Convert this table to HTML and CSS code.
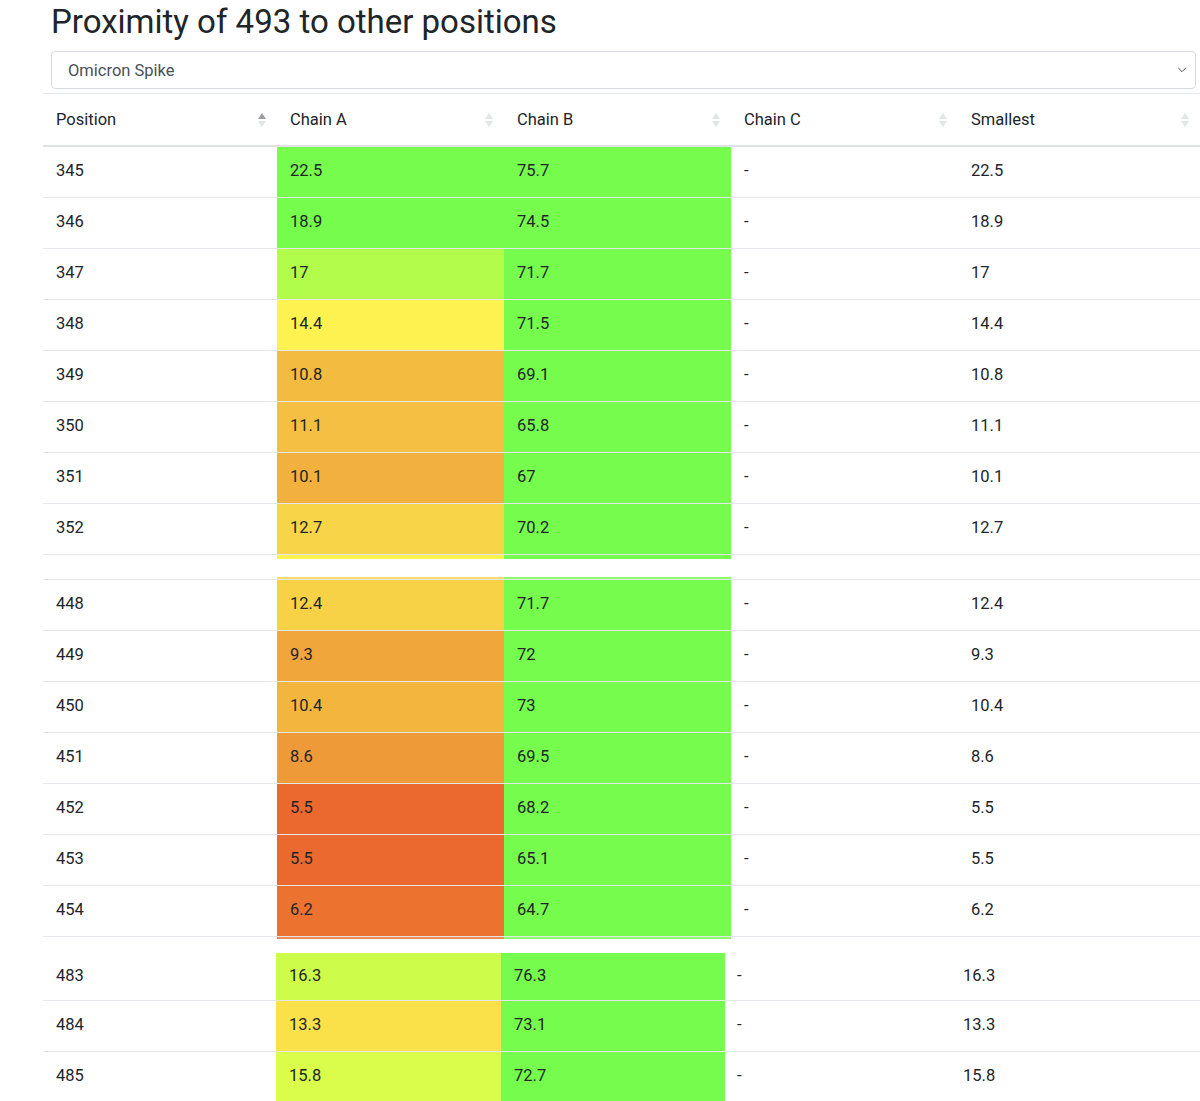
FILE: index.html
```html
<!DOCTYPE html>
<html lang="en">
<head>
<meta charset="utf-8">
<title>Proximity of 493</title>
<link rel="stylesheet" href="styles.css">
</head>
<body>
<main class="page">
  <h1 class="title">Proximity of 493 to other positions</h1>
  <div class="select">
    <span class="select-text">Omicron Spike</span>
    <svg class="chevron" width="10" height="6" viewBox="0 0 10 6"><path d="M1.5 1.2l3.5 3.5 3.5-3.5" fill="none" stroke="#4a5056" stroke-width="1" stroke-linecap="round" stroke-linejoin="round"/></svg>
  </div>

  <table class="grid sec1">
    <colgroup><col class="c1"><col class="c2"><col class="c3"><col class="c4"><col class="c5"></colgroup>
    <thead>
      <tr>
        <th><div class="th-in"><span>Position</span><span class="sort asc"><i class="up"></i><i class="down"></i></span></div></th>
        <th><div class="th-in"><span>Chain A</span><span class="sort"><i class="up"></i><i class="down"></i></span></div></th>
        <th><div class="th-in"><span>Chain B</span><span class="sort"><i class="up"></i><i class="down"></i></span></div></th>
        <th><div class="th-in"><span>Chain C</span><span class="sort"><i class="up"></i><i class="down"></i></span></div></th>
        <th><div class="th-in"><span>Smallest</span><span class="sort"><i class="up"></i><i class="down"></i></span></div></th>
      </tr>
    </thead>
    <tbody>
      <tr><td>345</td><td style="background:#76fc4c">22.5</td><td style="background:#76fc4c">75.7</td><td>-</td><td>22.5</td></tr>
      <tr><td>346</td><td style="background:#76fc4c">18.9</td><td style="background:#76fc4c">74.5</td><td>-</td><td>18.9</td></tr>
      <tr><td>347</td><td style="background:#b2fc4b">17</td><td style="background:#76fc4c">71.7</td><td>-</td><td>17</td></tr>
      <tr><td>348</td><td style="background:#fdf24f">14.4</td><td style="background:#76fc4c">71.5</td><td>-</td><td>14.4</td></tr>
      <tr><td>349</td><td style="background:#f3bb40">10.8</td><td style="background:#76fc4c">69.1</td><td>-</td><td>10.8</td></tr>
      <tr><td>350</td><td style="background:#f4bf42">11.1</td><td style="background:#76fc4c">65.8</td><td>-</td><td>11.1</td></tr>
      <tr><td>351</td><td style="background:#f2b03e">10.1</td><td style="background:#76fc4c">67</td><td>-</td><td>10.1</td></tr>
      <tr><td>352</td><td style="background:#f8d548">12.7</td><td style="background:#76fc4c">70.2</td><td>-</td><td>12.7</td></tr>
      <tr class="sliver"><td></td><td style="background:#fdf24f"></td><td style="background:#76fc4c"></td><td></td><td></td></tr>
    </tbody>
  </table>

  <table class="grid sec2">
    <colgroup><col class="c1"><col class="c2"><col class="c3"><col class="c4"><col class="c5"></colgroup>
    <tbody>
      <tr class="sliver top"><td></td><td style="background:#f9dc6a"></td><td style="background:#8cfb6a"></td><td></td><td></td></tr>
      <tr><td>448</td><td style="background:#f7d246">12.4</td><td style="background:#76fc4c">71.7</td><td>-</td><td>12.4</td></tr>
      <tr><td>449</td><td style="background:#f0a63b">9.3</td><td style="background:#76fc4c">72</td><td>-</td><td>9.3</td></tr>
      <tr><td>450</td><td style="background:#f2b63f">10.4</td><td style="background:#76fc4c">73</td><td>-</td><td>10.4</td></tr>
      <tr><td>451</td><td style="background:#ef9a38">8.6</td><td style="background:#76fc4c">69.5</td><td>-</td><td>8.6</td></tr>
      <tr><td>452</td><td style="background:#eb692e">5.5</td><td style="background:#76fc4c">68.2</td><td>-</td><td>5.5</td></tr>
      <tr><td>453</td><td style="background:#eb692e">5.5</td><td style="background:#76fc4c">65.1</td><td>-</td><td>5.5</td></tr>
      <tr><td>454</td><td style="background:#ec7230">6.2</td><td style="background:#76fc4c">64.7</td><td>-</td><td>6.2</td></tr>
      <tr class="sliver bottom"><td></td><td style="background:#f08a55"></td><td style="background:#8cfb6a"></td><td></td><td></td></tr>
    </tbody>
  </table>

  <table class="grid sec3">
    <colgroup><col class="d1"><col class="d2"><col class="d3"><col class="d4"><col class="d5"></colgroup>
    <tbody>
      <tr class="first"><td>483</td><td style="background:#cdfc4b">16.3</td><td style="background:#76fc4c">76.3</td><td>-</td><td>16.3</td></tr>
      <tr><td>484</td><td style="background:#fae14a">13.3</td><td style="background:#76fc4c">73.1</td><td>-</td><td>13.3</td></tr>
      <tr><td>485</td><td style="background:#dafd4c">15.8</td><td style="background:#76fc4c">72.7</td><td>-</td><td>15.8</td></tr>
    </tbody>
  </table>
</main>
</body>
</html>
```

FILE: styles.css
```css
html, body {
  margin: 0;
  padding: 0;
  background: #ffffff;
}

body {
  font-family: Roboto, "Liberation Sans", Arial, sans-serif;
  color: #212529;
  overflow: hidden;
  height: 1101px;
}

.page {
  padding-left: 43px;
  width: 1157px;
}

.title {
  margin: 0 0 0 8px;
  padding-top: 2px;
  font-size: 33px;
  font-weight: 400;
  line-height: 40px;
  height: 49px;
  color: #212529;
}

.select {
  margin-left: 8px;
  width: 1145px;
  height: 38px;
  box-sizing: border-box;
  border: 1px solid #d8dce0;
  border-radius: 4px;
  display: flex;
  align-items: center;
  justify-content: space-between;
  padding: 0 8px 0 16px;
  font-size: 16.5px;
  color: #495057;
}

.chevron {
  display: block;
}

.grid {
  border-collapse: collapse;
  table-layout: fixed;
  width: 1157px;
  font-size: 16.5px;
}

.sec1 {
  margin-top: 4px;
}

.c1 { width: 234px; }
.c2 { width: 227px; }
.c3 { width: 227px; }
.c4 { width: 227px; }
.c5 { width: 242px; }

.d1 { width: 233px; }
.d2 { width: 225px; }
.d3 { width: 224px; }
.d4 { width: 225px; }
.d5 { width: 250px; }

.grid th {
  border-top: 1px solid #e6e8eb;
  border-bottom: 2px solid #dee2e6;
  height: 51px;
  padding: 0 6px 0 13px;
  font-weight: 400;
  text-align: left;
}

.th-in {
  display: flex;
  align-items: center;
  justify-content: space-between;
}

.sort {
  display: flex;
  flex-direction: column;
  align-items: center;
  gap: 2px;
  width: 18px;
}

.sort i {
  display: block;
  width: 0;
  height: 0;
  border-left: 4px solid transparent;
  border-right: 4px solid transparent;
}

.sort .up {
  border-bottom: 6px solid #e2e4e6;
}

.sort .down {
  border-top: 6px solid #e2e4e6;
}

.sort.asc .up {
  border-bottom-color: #9a9ea3;
}

.grid td {
  height: 46px;
  padding: 0 8px 4px 13px;
  border-bottom: 1px solid #e4e6e9;
  vertical-align: middle;
  white-space: nowrap;
}

.grid tr.sliver td {
  height: 4px;
  padding: 0;
  border-bottom: 0;
  font-size: 0;
  line-height: 0;
}

.sec2 {
  margin-top: 18px;
}

.sec2 tr.sliver.top td {
  height: 2px;
  border-bottom: 1px solid #e4e6e9;
}

.sec2 tr.sliver.bottom td {
  height: 2px;
}

.sec3 {
  margin-top: 14px;
}

.sec3 td {
  padding-left: 13px;
}

.sec3 td:nth-child(4) {
  padding-left: 12px;
}

.sec3 tr.first td {
  height: 44px;
  padding-bottom: 3px;
}
```
